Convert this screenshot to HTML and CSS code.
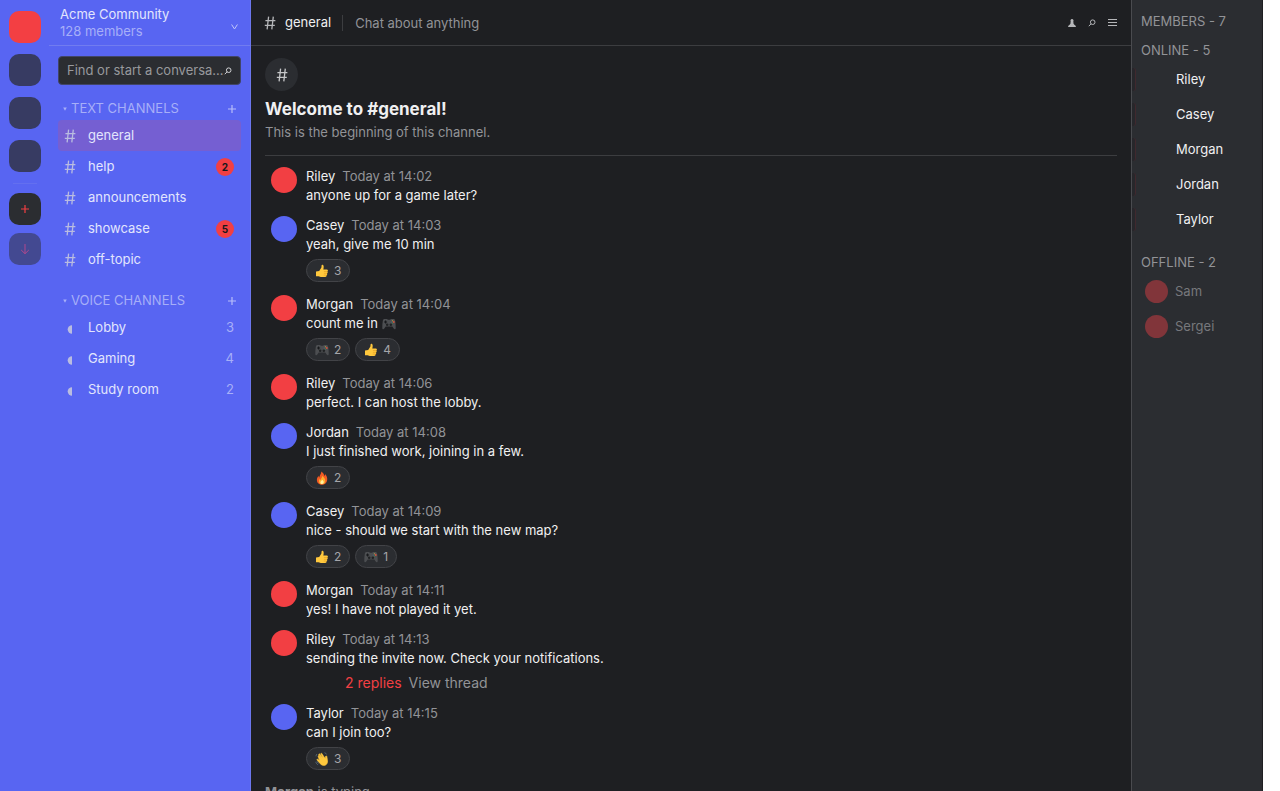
FILE: index.html
```html
<!DOCTYPE html>
<html lang="en">
<head>
<meta charset="utf-8">
<title>Acme Community - #general</title>
<link rel="stylesheet" href="styles.css">
</head>
<body>
<svg class="defs" aria-hidden="true">
  <symbol id="hash" viewBox="0 0 12 14"><path d="M4.600.7 3.100 13.300M9.300.7 7.800 13.300M1.400 4.700h10M.8 9.300h10" fill="none" stroke="currentColor" stroke-width="1.300"/></symbol>
  <symbol id="search" viewBox="0 0 8 8"><circle cx="4.7" cy="3.2" r="2.3" fill="none" stroke="currentColor"/><path d="M3.1 4.8.8 7.2" stroke="currentColor"/></symbol>
  <symbol id="plus" viewBox="0 0 10 10"><path d="M5 1v8M1 5h8" stroke="currentColor" stroke-width="1.2"/></symbol>
  <symbol id="caret" viewBox="0 0 4 4"><path d="M.2.5h3.6L2 3.8z" fill="currentColor"/></symbol>
  <symbol id="half" viewBox="0 0 5 9"><path d="M5 .3v8.4A4.3 4.2 0 0 1 5 .3z" fill="currentColor"/></symbol>
  <symbol id="thumb" viewBox="0 0 14 14"><path d="M1 7.400 4.200 7 6.400 3.600 6.600 1.200C6.700.3 8.400.5 8.600 1.900c.2 1.300-.1 2.700-.3 3.700h3.400c1.500 0 1.600 1.700.6 2 .7.500.5 1.600-.3 1.800.500.600.200 1.500-.5 1.700.300 1.100-.3 2-1.300 2H6.800c-1.500 0-2.200-.6-3.300-.8L1 12.200z" fill="#ffc83d"/><path d="M8.900 7.500h3.300M8.900 9.300h3.100M8.700 11.100h3" stroke="#e19b20" stroke-width=".6"/></symbol>
  <symbol id="pad" viewBox="0 0 14 12"><path d="M2.200 1h3l.5.700h2.600l.5-.7h3c1 0 1.200 1 1.400 2 .4 2.200.6 4.600.5 7 0 1.500-1.400 1.600-2 .5L10.300 8.600H3.700l-1.400 1.900c-.6 1.100-2 1-2-.5-.1-2.400.1-4.800.5-7 .2-1 .4-2 1.400-2z" fill="#4c4e51"/><path d="M2.100 4h3M3.600 2.500v3" stroke="#16181a"/><circle cx="5.200" cy="6.700" r="1.300" fill="#202224"/><circle cx="8.800" cy="6.700" r="1.300" fill="#202224"/><circle cx="10.500" cy="2.800" r=".7" fill="#a58f43"/><circle cx="11.800" cy="4" r=".9" fill="#d5533e"/><circle cx="9.300" cy="4" r=".6" fill="#43708a"/><circle cx="10.500" cy="5.200" r=".6" fill="#437b4d"/></symbol>
  <symbol id="fire" viewBox="0 0 14 14"><path d="M6.300.4c2.300 1.500 2.900 3 2.900 4.600.700-.5.900-1.200.800-2 2 2 2.400 4 2.200 6-.300 3-2.600 4.700-5.200 4.700S2 12 1.900 9.200c-.1-2 .8-3.400 1.600-4.500.1 1 .4 1.500.8 1.900C4.300 4.400 6.600 2.600 6.300.4z" fill="#f35b24"/><path d="M7.400 4.700c1.900 2.100 3.200 3.600 2.900 5.500-.3 2-1.600 3-3.200 3s-3.200-1-3.200-3c0-1 .4-1.800.9-2.500.1.700.5 1 .9 1.200.1-1.500 1.500-2.500 1.700-4.200z" fill="#ffb02e"/><path d="M7.200 8.700c1 1 1.600 1.500 1.500 2.600 0 1.100-.8 1.700-1.600 1.700s-1.700-.6-1.700-1.600c0-1.100 1.200-1.600 1.800-2.700z" fill="#fff1a0"/></symbol>
  <symbol id="wave" viewBox="0 0 14 14"><path d="m3 4.100.9-.5 2.600 2.900-2.900-4 .9-.8 3.400 4-2.200-4 .9-.5 3.600 5.400c.1-1 0-2 .7-2.600.7-.3 1 .2 1 .8.200 1.800.9 3.400.6 5.200-.3 2.100-1.800 3.600-3.800 3.500-1.900-.1-3.200-1.400-4.400-2.800L1.800 7.800l.7-.7 2 1.500z" fill="#ffc83d" stroke="#ffc83d" stroke-width=".6"/><path d="M.8 9.800c.3 1.600 1 2.400 2.300 3M2 9.200c.2 1 .8 1.700 1.600 2.100M9.500.7c1 .2 1.700.8 2 1.700M1 4.300c0-1 .3-1.800 1-2.300" fill="none" stroke="#62798a" stroke-width=".7"/></symbol>
</svg>

<div class="app">
  <nav class="rail" aria-label="Servers">
    <button class="server server-active" aria-label="Acme Community"></button>
    <button class="server" aria-label="Server 2"></button>
    <button class="server" aria-label="Server 3"></button>
    <button class="server" aria-label="Server 4"></button>
    <hr class="rail-line">
    <button class="server server-add" aria-label="Add a server"><svg width="10" height="10"><use href="#plus"/></svg></button>
    <button class="server server-down" aria-label="Download apps"><svg width="10" height="12" viewBox="0 0 10 12"><path d="M5 1v9.500M1.200 7 5 10.700 8.800 7" fill="none" stroke="currentColor"/></svg></button>
  </nav>

  <aside class="sidebar">
    <header class="community">
      <div><div class="community-name">Acme Community</div><div class="community-count">128 members</div></div>
      <button class="bare" aria-label="Community menu"><svg width="7" height="6" viewBox="0 0 7 6"><path d="M.6.500 3.500 5 6.400.500" fill="none" stroke="currentColor"/></svg></button>
    </header>
    <label class="search">
      <input type="text" placeholder="Find or start a conversation" aria-label="Find or start a conversation">
      <svg width="8" height="8"><use href="#search"/></svg>
    </label>
    <section>
      <div class="group"><svg width="4" height="4"><use href="#caret"/></svg><h2>TEXT CHANNELS</h2><button class="bare" aria-label="Add text channel"><svg width="10" height="10"><use href="#plus"/></svg></button></div>
      <ul class="channels">
        <li><a class="channel current" href="#general"><svg width="12" height="14"><use href="#hash"/></svg><span>general</span></a></li>
        <li><a class="channel" href="#help"><svg width="12" height="14"><use href="#hash"/></svg><span>help</span><b class="badge">2</b></a></li>
        <li><a class="channel" href="#announcements"><svg width="12" height="14"><use href="#hash"/></svg><span>announcements</span></a></li>
        <li><a class="channel" href="#showcase"><svg width="12" height="14"><use href="#hash"/></svg><span>showcase</span><b class="badge">5</b></a></li>
        <li><a class="channel" href="#off-topic"><svg width="12" height="14"><use href="#hash"/></svg><span>off-topic</span></a></li>
      </ul>
    </section>
    <section>
      <div class="group"><svg width="4" height="4"><use href="#caret"/></svg><h2>VOICE CHANNELS</h2><button class="bare" aria-label="Add voice channel"><svg width="10" height="10"><use href="#plus"/></svg></button></div>
      <ul class="channels">
        <li><a class="channel voice" href="#lobby"><svg width="5" height="9"><use href="#half"/></svg><span>Lobby</span><i class="count">3</i></a></li>
        <li><a class="channel voice" href="#gaming"><svg width="5" height="9"><use href="#half"/></svg><span>Gaming</span><i class="count">4</i></a></li>
        <li><a class="channel voice" href="#study"><svg width="5" height="9"><use href="#half"/></svg><span>Study room</span><i class="count">2</i></a></li>
      </ul>
    </section>
  </aside>

  <main class="chat">
    <header class="topbar">
      <svg class="topbar-hash" width="12" height="14"><use href="#hash"/></svg>
      <h1>general</h1>
      <p class="topic">Chat about anything</p>
      <div class="tools">
        <button class="bare" aria-label="Members"><svg width="8" height="10" viewBox="0 0 8 10"><path d="M4 1a1.600 1.600 0 0 1 1.200 2.600l.6.600-.6.400c.2 1.200.8 2 1.900 2.700.6.500.8 1 .8 1.800H.1c0-.8.2-1.300.8-1.800C2 6.600 2.600 5.800 2.800 4.600L2.200 4.200l.6-.6A1.600 1.600 0 0 1 4 1z" fill="currentColor"/></svg></button>
        <button class="bare" aria-label="Search"><svg width="8" height="8"><use href="#search"/></svg></button>
        <button class="bare" aria-label="Menu"><svg width="9" height="9" viewBox="0 0 9 9"><path d="M0 1.500h9M0 4.500h9M0 7.500h9" stroke="currentColor"/></svg></button>
      </div>
    </header>

    <div class="scroll">
      <section class="welcome">
        <div class="welcome-icon"><svg width="12" height="14"><use href="#hash"/></svg></div>
        <h2>Welcome to #general!</h2>
        <p>This is the beginning of this channel.</p>
      </section>

      <article class="message"><span class="avatar red"></span><div>
        <p class="meta"><b>Riley</b><time>Today at 14:02</time></p><p>anyone up for a game later?</p></div></article>
      <article class="message"><span class="avatar blue"></span><div>
        <p class="meta"><b>Casey</b><time>Today at 14:03</time></p><p>yeah, give me 10 min</p>
        <div class="reactions"><button><svg width="14" height="14"><use href="#thumb"/></svg>3</button></div></div></article>
      <article class="message"><span class="avatar red"></span><div>
        <p class="meta"><b>Morgan</b><time>Today at 14:04</time></p><p>count me in <svg class="inline-emoji" width="14" height="12" role="img" aria-label="game controller"><use href="#pad"/></svg></p>
        <div class="reactions"><button><svg width="14" height="12"><use href="#pad"/></svg>2</button><button><svg width="14" height="14"><use href="#thumb"/></svg>4</button></div></div></article>
      <article class="message"><span class="avatar red"></span><div>
        <p class="meta"><b>Riley</b><time>Today at 14:06</time></p><p>perfect. I can host the lobby.</p></div></article>
      <article class="message"><span class="avatar blue"></span><div>
        <p class="meta"><b>Jordan</b><time>Today at 14:08</time></p><p>I just finished work, joining in a few.</p>
        <div class="reactions"><button><svg width="14" height="14"><use href="#fire"/></svg>2</button></div></div></article>
      <article class="message"><span class="avatar blue"></span><div>
        <p class="meta"><b>Casey</b><time>Today at 14:09</time></p><p>nice - should we start with the new map?</p>
        <div class="reactions"><button><svg width="14" height="14"><use href="#thumb"/></svg>2</button><button><svg width="14" height="12"><use href="#pad"/></svg>1</button></div></div></article>
      <article class="message"><span class="avatar red"></span><div>
        <p class="meta"><b>Morgan</b><time>Today at 14:11</time></p><p>yes! I have not played it yet.</p></div></article>
      <article class="message"><span class="avatar red"></span><div>
        <p class="meta"><b>Riley</b><time>Today at 14:13</time></p><p>sending the invite now. Check your notifications.</p>
        <p class="thread"><a href="#thread">2 replies</a><span>View thread</span></p></div></article>
      <article class="message"><span class="avatar blue"></span><div>
        <p class="meta"><b>Taylor</b><time>Today at 14:15</time></p><p>can I join too?</p>
        <div class="reactions"><button><svg width="14" height="14"><use href="#wave"/></svg>3</button></div></div></article>
      <p class="typing"><b>Morgan</b> is typing</p>
    </div>
  </main>

  <aside class="members">
    <h2>MEMBERS - 7</h2>
    <h3>ONLINE - 5</h3>
    <ul>
      <li class="member online">Riley</li>
      <li class="member online">Casey</li>
      <li class="member online">Morgan</li>
      <li class="member online">Jordan</li>
      <li class="member online">Taylor</li>
    </ul>
    <h3 class="offline-title">OFFLINE - 2</h3>
    <ul>
      <li class="member offline"><span class="member-avatar"></span>Sam</li>
      <li class="member offline"><span class="member-avatar"></span>Sergei</li>
    </ul>
  </aside>
</div>
</body>
</html>
```

FILE: styles.css
```css
* { box-sizing: border-box; margin: 0; padding: 0; }
html, body { height: 100%; }
body {
  overflow: hidden;
  background: #fff;
  color: #f0f0f1;
  font: 13px/19px Inter, sans-serif;
}
ul { list-style: none; }
a { color: inherit; text-decoration: none; }
svg { display: block; flex: none; }
button { border: 0; background: none; color: inherit; font: inherit; }
h1, h2, h3 { font-size: 13px; font-weight: 400; }
.defs { position: absolute; width: 0; height: 0; }
.bare { display: flex; align-items: center; justify-content: center; }

.app {
  display: grid;
  grid-template-columns: 49px 202px minmax(0, 1fr) 132px;
  height: 100vh;
  margin-right: 17px;
}

.rail {
  display: flex;
  flex-direction: column;
  align-items: center;
  padding-top: 11px;
  background: #5865f2;
}
.server {
  display: flex;
  flex: none;
  align-items: center;
  justify-content: center;
  width: 32px;
  height: 32px;
  margin-bottom: 11px;
  border-radius: 10px;
  background: #373b62;
}
.server-active { background: #f33f43; }
.rail-line { width: 24px; border: 0; border-top: 1px solid #636ff0; margin-bottom: 9px; }
.server-add { margin-bottom: 8px; background: #2b2d31; color: #f23f43; }
.server-down { background: #434991; color: #b0488e; }

.sidebar { background: #5865f2; border-right: 1px solid #6c77ee; color: #e2e5fd; }
.community {
  display: flex;
  justify-content: space-between;
  height: 46px;
  padding: 6px 12px 0 11px;
  border-bottom: 1px solid #717cf0;
  line-height: 17px;
}
.community-count { color: #a7aff8; }
.community .bare { color: #c0c5f8; height: 42px; }
.search {
  display: flex;
  align-items: center;
  height: 29px;
  margin: 10px 9px 12px 9px;
  padding: 0 8px;
  border: 1px solid #414568;
  border-radius: 4px;
  background: #2b2d31;
  color: #d0d1d4;
}
.search input {
  flex: 1;
  min-width: 0;
  border: 0;
  outline: 0;
  background: none;
  color: inherit;
  font: inherit;
  text-overflow: ellipsis;
}
.search input::placeholder { color: #98999d; opacity: 1; }
.group {
  display: flex;
  align-items: center;
  height: 23px;
  padding: 0 13px 0 14px;
  color: #a7aff8;
}
.group h2 { flex: 1; margin-left: 4px; }
.group .bare { color: #b7bdf9; }
.channels { margin: 0 9px 14px; }
.channel {
  display: flex;
  align-items: center;
  height: 31px;
  padding: 0 7px 0 6px;
  border-radius: 4px;
}
.channel svg { color: #b9bce0; }
.channel span { flex: 1; margin-left: 12px; }
.channel.voice svg { margin: 3px 4px 0 3px; }
.current { background: #755fd2; }
.badge {
  width: 18px;
  height: 18px;
  border-radius: 50%;
  background: #f23f43;
  color: #17181b;
  font-size: 10px;
  line-height: 18px;
  text-align: center;
}
.count { color: #a7aff8; font-style: normal; }

.chat { display: flex; flex-direction: column; min-height: 0; background: #1e1f22; }
.topbar {
  display: flex;
  flex: none;
  align-items: center;
  height: 46px;
  padding: 0 14px 0 13px;
  border-bottom: 1px solid #3c3d40;
}
.topbar-hash { color: #b5b6b9; }
.topbar h1 { margin: 0 11px 0 9px; }
.topic { padding-left: 12px; border-left: 1px solid #3c3d40; line-height: 16px; color: #929397; }
.tools { display: flex; align-items: center; gap: 12px; margin-left: auto; color: #b5b6b9; }
.scroll { flex: 1; min-height: 0; overflow: hidden; padding: 12px 14px 0; }
.welcome { padding-bottom: 13px; margin-bottom: 11px; border-bottom: 1px solid #3c3d40; }
.welcome-icon {
  display: flex;
  align-items: center;
  justify-content: center;
  width: 33px;
  height: 33px;
  border-radius: 50%;
  background: #2b2d31;
  color: #c5c6c8;
}
.welcome h2 { margin-top: 6px; font-size: 17px; font-weight: 700; line-height: 24px; }
.welcome p { margin-top: 2px; color: #929397; }
.message { display: flex; gap: 9px; padding: 0 6px; margin-bottom: 11px; }
.avatar { flex: none; width: 26px; height: 26px; border-radius: 50%; }
.red { background: #f23f43; }
.blue { background: #5865f2; }
.meta { display: flex; gap: 7px; }
.meta b { font-weight: 400; }
.meta time { color: #929397; }
.inline-emoji { display: inline-block; vertical-align: -2px; }
.reactions { display: flex; gap: 5px; margin: 5px 0 2px; }
.reactions button {
  display: flex;
  align-items: center;
  gap: 5px;
  height: 23px;
  padding: 0 8px;
  border: 1px solid #424347;
  border-radius: 12px;
  background: #2b2d31;
  color: #a5a6aa;
  font-size: 12px;
}
.thread { display: flex; gap: 7px; margin: 5px 0 1px 39px; font-size: 14px; }
.thread a { color: #f23f43; }
.thread span { color: #929397; }
.typing { color: #929397; }

.members {
  padding: 12px 0;
  border-left: 1px solid #4a4b4f;
  border-right: 1px solid #1e1f22;
  background: #2b2d31;
}
.members h2, .members h3 { padding-left: 9px; color: #929397; }
.members h3 { margin-top: 10px; }
.members ul { margin-top: 2px; }
.member { display: flex; align-items: center; height: 35px; }
.member.online::before {
  content: "";
  width: 3px;
  height: 23px;
  margin-right: 40px;
  border-right: 1px solid #40292e;
  border-radius: 0 3px 3px 0;
  background: #27272b;
}
.member.offline { padding-left: 13px; color: #77787c; }
.members .offline-title { margin-top: 16px; }
.member-avatar { width: 23px; height: 23px; margin-right: 7px; border-radius: 50%; background: #81353a; }
```
